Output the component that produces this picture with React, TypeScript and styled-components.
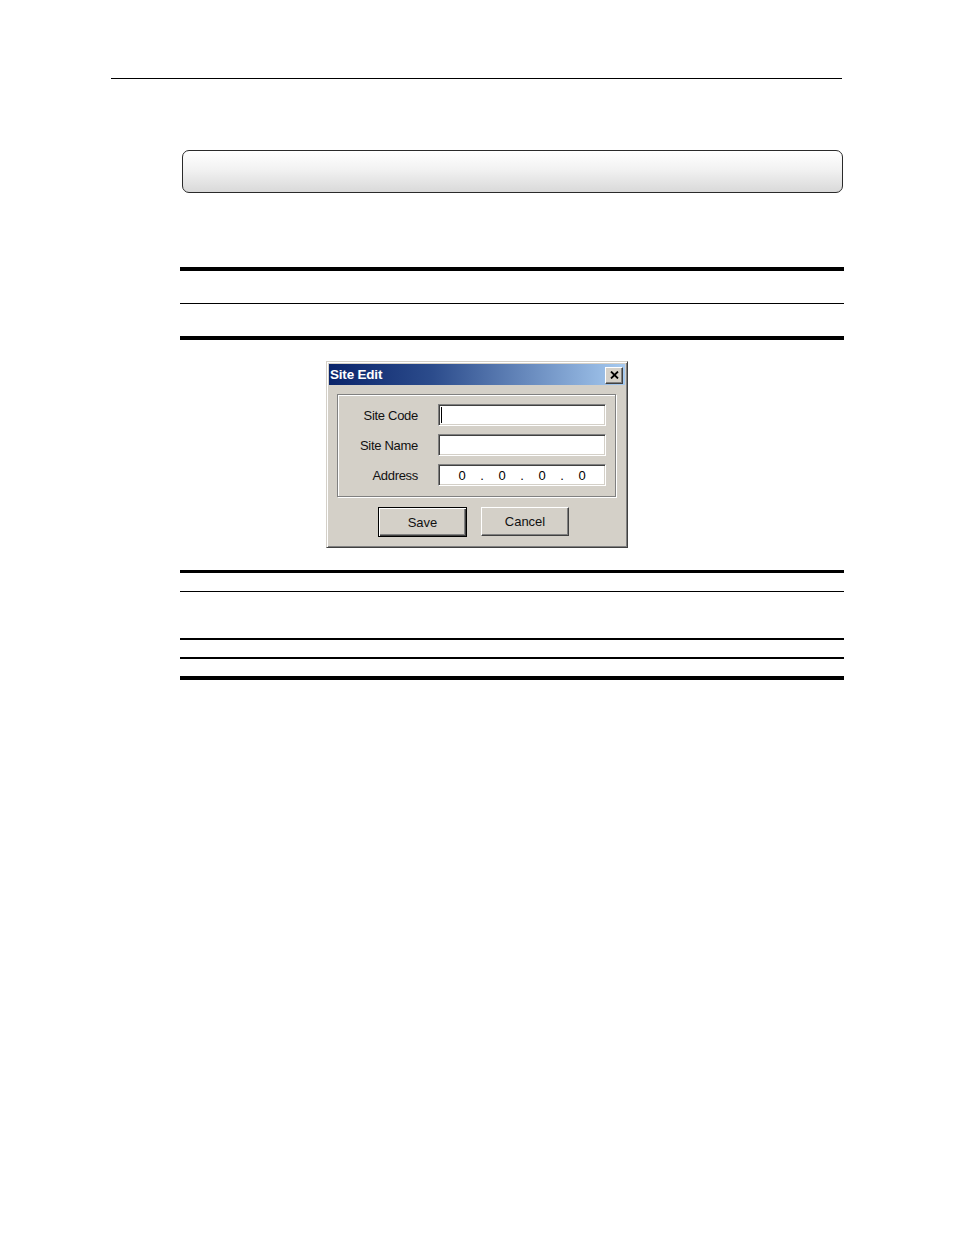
import { Fragment } from 'react';
import styled, { createGlobalStyle } from 'styled-components';

const GlobalStyle = createGlobalStyle`
  html, body {
    margin: 0;
    padding: 0;
    background: #ffffff;
  }

  body {
    font-family: "Liberation Sans", Arial, sans-serif;
  }
`;

const Page = styled.div`
  width: 954px;
  height: 1235px;
  padding-top: 78px;
  box-sizing: border-box;
  overflow: hidden;
`;

const HeaderRule = styled.div`
  width: 731px;
  height: 1px;
  margin-left: 111px;
  background: #000;
`;

const Banner = styled.div`
  box-sizing: border-box;
  width: 661px;
  height: 43px;
  margin: 71px 0 0 182px;
  border: 1px solid #2a2a2a;
  border-radius: 7px;
  background: linear-gradient(to bottom, #ffffff 0%, #f2f2f2 45%, #d9d9d9 100%);
`;

const Rule = styled.div<{ $weight: number; $gap: number }>`
  width: 664px;
  height: ${(p) => p.$weight}px;
  margin: ${(p) => p.$gap}px 0 0 180px;
  background: #000;
`;

const Window = styled.div`
  box-sizing: border-box;
  width: 302px;
  margin: 21px 0 0 326px;
  padding: 2px;
  border: 1px solid;
  border-color: #d4d0c8 #404040 #404040 #d4d0c8;
  box-shadow: inset 1px 1px 0 #ffffff, inset -1px -1px 0 #808080;
  background: #d4d0c8;
  font-family: "Liberation Sans", Arial, sans-serif;
`;

const TitleBar = styled.div`
  display: flex;
  align-items: center;
  justify-content: space-between;
  height: 21px;
  padding: 0 2px 0 1px;
  background: linear-gradient(to right, #0a246a 0%, #2c4c8c 35%, #a6caf0 100%);
`;

const Title = styled.span`
  color: #fff;
  font-weight: bold;
  font-size: 13.5px;
  letter-spacing: -0.2px;
`;

const CloseButton = styled.div`
  box-sizing: border-box;
  display: flex;
  align-items: center;
  justify-content: center;
  width: 18px;
  height: 17px;
  margin-top: 1px;
  border: 1px solid;
  border-color: #ffffff #404040 #404040 #ffffff;
  box-shadow: inset -1px -1px 0 #808080;
  background: #d4d0c8;
`;

const Body = styled.div`
  padding: 9px 7px 8px 8px;
`;

const GroupBox = styled.div`
  display: grid;
  grid-template-columns: 80px 168px;
  grid-auto-rows: 22px;
  align-content: start;
  column-gap: 20px;
  row-gap: 8px;
  align-items: center;
  box-sizing: border-box;
  width: 279px;
  height: 103px;
  padding-top: 9px;
  border: 1px solid #808080;
  box-shadow: inset 1px 1px 0 #ffffff, 1px 1px 0 #ffffff;
`;

const Label = styled.span`
  text-align: right;
  font-size: 13px;
  letter-spacing: -0.3px;
  color: #111;
`;

const Field = styled.div`
  box-sizing: border-box;
  display: flex;
  align-items: center;
  height: 22px;
  border: 1px solid;
  border-color: #808080 #ffffff #ffffff #808080;
  box-shadow: inset 1px 1px 0 #404040, inset -1px -1px 0 #d4d0c8;
  background: #fff;
`;

const Caret = styled.span`
  width: 1px;
  height: 16px;
  margin-left: 2px;
  background: #000;
`;

const AddressField = styled(Field)`
  padding-left: 6px;
  font-size: 13px;
  color: #000;
`;

const Octet = styled.span`
  width: 34px;
  text-align: center;
`;

const Dot = styled.span`
  width: 6px;
  text-align: center;
`;

const ButtonRow = styled.div`
  display: flex;
  gap: 14px;
  margin: 10px 0 0 41px;
`;

const Button = styled.div<{ $default?: boolean; $width: number }>`
  box-sizing: border-box;
  display: flex;
  align-items: center;
  justify-content: center;
  width: ${(p) => p.$width}px;
  height: ${(p) => (p.$default ? 30 : 29)}px;
  font-size: 13px;
  color: #111;
  background: #d4d0c8;
  border: 1px solid;
  border-color: ${(p) => (p.$default ? '#000' : '#ffffff #404040 #404040 #ffffff')};
  box-shadow: ${(p) =>
    p.$default
      ? 'inset 1px 1px 0 #ffffff, inset -1px -1px 0 #404040, inset -2px -2px 0 #808080'
      : 'inset -1px -1px 0 #808080'};
`;

const addressParts = ['0', '0', '0', '0'];

const App = () => {
  return (
    <>
      <GlobalStyle />
      <Page>
        <HeaderRule />
        <Banner />
        <Rule $weight={4} $gap={74} />
        <Rule $weight={1} $gap={32} />
        <Rule $weight={4} $gap={32} />

        <Window>
          <TitleBar>
            <Title>Site Edit</Title>
            <CloseButton>
              <svg width="9" height="8" viewBox="0 0 9 8">
                <path d="M1 0.5 L8 7.5 M8 0.5 L1 7.5" stroke="#000" strokeWidth="1.8" />
              </svg>
            </CloseButton>
          </TitleBar>
          <Body>
            <GroupBox>
              <Label>Site Code</Label>
              <Field>
                <Caret />
              </Field>
              <Label>Site Name</Label>
              <Field />
              <Label>Address</Label>
              <AddressField>
                {addressParts.map((part, index) => (
                  <Fragment key={index}>
                    <Octet>{part}</Octet>
                    {index < addressParts.length - 1 && <Dot>.</Dot>}
                  </Fragment>
                ))}
              </AddressField>
            </GroupBox>
            <ButtonRow>
              <Button $default $width={89}>Save</Button>
              <Button $width={88}>Cancel</Button>
            </ButtonRow>
          </Body>
        </Window>

        <Rule $weight={3} $gap={22} />
        <Rule $weight={1} $gap={18} />
        <Rule $weight={2} $gap={46} />
        <Rule $weight={2} $gap={17} />
        <Rule $weight={4} $gap={17} />
      </Page>
    </>
  );
};

export default App;
